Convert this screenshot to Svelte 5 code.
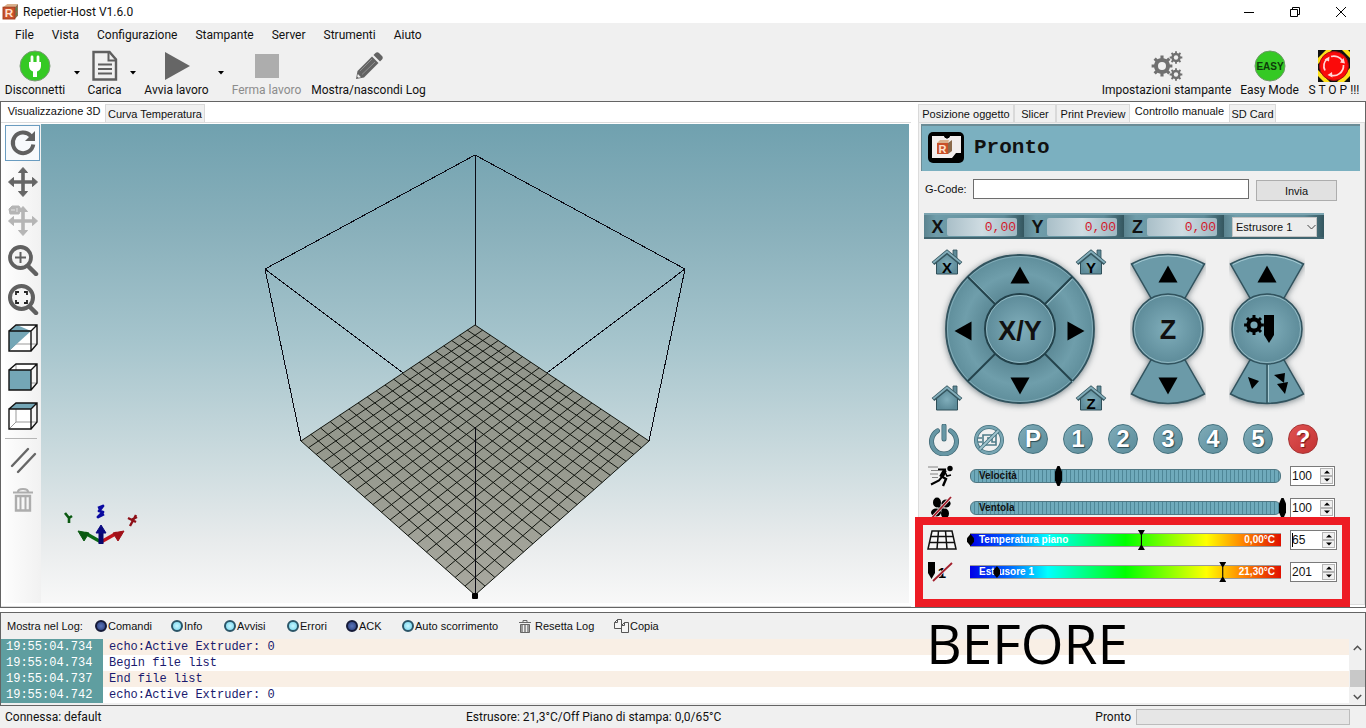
<script>
  const menu = ['File', 'Vista', 'Configurazione', 'Stampante', 'Server', 'Strumenti', 'Aiuto'];

  const mainTools = [
    { id: 'plug', label: 'Disconnetti', width: 60, split: true },
    { id: 'doc', label: 'Carica', width: 33, split: true },
    { id: 'play', label: 'Avvia lavoro', width: 65, split: true },
    { id: 'stop', label: 'Ferma lavoro', width: 69, disabled: true },
    { id: 'pencil', label: 'Mostra/nascondi Log', width: 113 }
  ];
  const sideTools = [
    { id: 'gears', label: 'Impostazioni stampante', width: 127 },
    { id: 'easy', label: 'Easy Mode', width: 57 },
    { id: 'emergency', label: 'S T O P !!!', width: 50 }
  ];

  const viewTools = [
    { id: 'rotate', label: 'Ruota', active: true },
    { id: 'move', label: 'Muovi' },
    { id: 'moveObject', label: 'Muovi oggetto', disabled: true },
    { id: 'zoom', label: 'Zoom' },
    { id: 'fit', label: 'Adatta' },
    { id: 'iso', label: 'Vista isometrica' },
    { id: 'front', label: 'Vista frontale' },
    { id: 'top', label: 'Vista dall’alto' }
  ];

  const rightTabs = [
    { label: 'Posizione oggetto', width: 96 },
    { label: 'Slicer', width: 42 },
    { label: 'Print Preview', width: 74 },
    { label: 'Controllo manuale', width: 99 },
    { label: 'SD Card', width: 47 }
  ];
  let activeTab = $state('Controllo manuale');

  const axes = ['X', 'Y', 'Z'];

  let sliders = $state([
    { id: 'speed', label: 'Velocità', min: 25, max: 300, value: 100 },
    { id: 'fan', label: 'Ventola', min: 0, max: 100, value: 100 },
    { id: 'bed', label: 'Temperatura piano', min: 0, max: 120, value: 65, heat: true, now: 0, read: '0,00°C' },
    { id: 'nozzle', label: 'Estrusore 1', min: 0, max: 250, value: 201, heat: true, now: 8.5, read: '21,30°C' }
  ]);

  function step(s, d) {
    s.value = Math.min(s.max, Math.max(s.min, Number(s.value) + d));
  }

  const filters = [
    { label: 'Comandi', on: true, width: 76 },
    { label: 'Info', on: false, width: 53 },
    { label: 'Avvisi', on: false, width: 63 },
    { label: 'Errori', on: false, width: 59 },
    { label: 'ACK', on: true, width: 56 },
    { label: 'Auto scorrimento', on: false, width: 117 }
  ];

  const log = [
    ['19:55:04.734', 'echo:Active Extruder: 0'],
    ['19:55:04.734', 'Begin file list'],
    ['19:55:04.737', 'End file list'],
    ['19:55:04.742', 'echo:Active Extruder: 0']
  ];

  // Perspective mapping of the unit square onto the print bed.
  const g = 38 / 232;
  function project(u, v) {
    const w = g * (u + v) + 1;
    const a = 260 * (1 + g) - 434;
    const b = 608 * (1 + g) - 434;
    const d = 317 * (1 + g) - 471;
    return `${((a * u + b * v + 434) / w).toFixed(1)} ${((d * (u + v) + 471) / w).toFixed(1)}`;
  }
  let gridPath = '';
  for (let i = 0; i <= 20; i++) {
    const t = i / 20;
    gridPath += `M${project(t, 0)}L${project(t, 1)}M${project(0, t)}L${project(1, t)}`;
  }

  function gear(cx, cy, r, ri, n) {
    let d = '';
    for (let i = 0; i < n; i++) {
      const c = (i / n) * Math.PI * 2;
      const h = Math.PI / n;
      [[-0.95, ri], [-0.5, ri], [-0.38, r], [0.38, r], [0.5, ri]].forEach(([k, rad]) => {
        d += `${d ? 'L' : 'M'}${(cx + Math.sin(c + k * h) * rad).toFixed(2)} ${(cy - Math.cos(c + k * h) * rad).toFixed(2)}`;
      });
    }
    return d + 'Z';
  }
</script>

{#snippet cubeLogo(size)}
  <svg width={size} height={size} viewBox="0 0 16 16" aria-hidden="true">
    <path d="M1 4 5 1l10 0-3 3z" fill="#d9b08c" />
    <path d="M12 4l3-3v11l-3 3z" fill="#8c6a4c" />
    <path d="M13 5l1-1v3l-1 1zM13 10l1-1v2l-1 1z" fill="#4d8a4c" />
    <rect x="1" y="4" width="11" height="11" fill="#c9502a" stroke="#a83c1c" />
    <text x="6.5" y="13.5" text-anchor="middle" font-family="Liberation Sans, sans-serif" font-weight="700" font-size="11" fill="#ffe2cf">R</text>
  </svg>
{/snippet}

{#snippet toolIcon(id)}
  <svg width="32" height="32" viewBox="0 0 32 32" aria-hidden="true">
    {#if id === 'plug'}
      <circle cx="16" cy="16" r="15" fill="#35c924" stroke="#7a9a76" stroke-width="1" />
      <path d="M13 7v6M19 7v6" stroke="#fff" stroke-width="2.800" stroke-linecap="round" />
      <path d="M10 12h12v4c0 3-2 5-4 5.500V27h-4v-5.500C12 21 10 19 10 16z" fill="#fff" />
    {:else if id === 'doc'}
      <path d="M4.500 2h16l6.500 7.500v20H4.500z" fill="none" stroke="#5f5f5f" stroke-width="2.400" />
      <path d="M19.500 2v8.500h7" fill="none" stroke="#5f5f5f" stroke-width="2" />
      <path d="M9 14.500h14M9 19h14M9 23.500h14" stroke="#5f5f5f" stroke-width="2.200" />
    {:else if id === 'play'}
      <path d="M4 2l25 14L4 30z" fill="#666" />
    {:else if id === 'stop'}
      <rect x="4" y="4" width="24" height="24" fill="#adadad" />
    {:else if id === 'pencil'}
      <path d="M3 29l1.500-8L19 6.500l6.500 6.500L11 27.500z" fill="#636363" />
      <path d="M20.500 5l2-2c1-1 2.500-1 3.500 0l3 3c1 1 1 2.500 0 3.500l-2 2z" fill="#636363" />
      <path d="M7 21l12-12M9 24.500L22 12" stroke="#999" stroke-width=".8" />
      <path d="M4.800 24l3.200 3.200-2.500.6-1.300-1.300z" fill="#f0f0f0" />
    {:else if id === 'gears'}
      <path d={gear(11, 16, 10.5, 8, 8)} fill="#707070" />
      <circle cx="11" cy="16" r="4" fill="#f0f0f0" />
      <path d={gear(25, 7.500, 6.4, 4.7, 8)} fill="#707070" />
      <circle cx="25" cy="7.500" r="2.200" fill="#f0f0f0" />
      <path d={gear(25, 24.500, 6.4, 4.7, 8)} fill="#707070" />
      <circle cx="25" cy="24.500" r="2.200" fill="#f0f0f0" />
    {:else if id === 'easy'}
      <circle cx="16" cy="16" r="15" fill="#35c924" stroke="#6b9a66" stroke-width="1" />
      <text x="16" y="19.500" text-anchor="middle" font-family="Liberation Sans, sans-serif" font-weight="700" font-size="10" fill="#0d3b0a">EASY</text>
    {:else if id === 'emergency'}
      <rect width="32" height="32" fill="#111" />
      <path d="M0 8L8 0h6L0 14zM32 2v6L24 0h6zM0 20v6l6 6h6zM32 18v8l-6 6h-7z" fill="#ffe11a" />
      <circle cx="16" cy="16" r="14.500" fill="#fb0a0a" stroke="#a01010" stroke-width="1" />
      <g fill="none" stroke="#ffd6d6" stroke-width="1.700">
        <path d="M7 20.500A10 10 0 0 1 9 9" />
        <path d="M13 6.500A10 10 0 0 1 24.500 11" />
        <path d="M25.500 15A10 10 0 0 1 12 25" />
      </g>
      <path d="M6.500 9.500l5-3-.5 5zM22 12.500l5 1-1.500-5.500zM14 22l-4.500 3 5 2.500z" fill="#ffd6d6" />
    {/if}
  </svg>
{/snippet}

{#snippet viewIcon(id)}
  <svg width="32" height="32" viewBox="0 0 32 32" aria-hidden="true">
    {#if id === 'rotate'}
      <path d="M23.800 9A10.300 10.300 0 1 0 26.300 17.500" fill="none" stroke="#606060" stroke-width="4" />
      <path d="M28 4v10H18z" fill="#606060" />
    {:else if id === 'move' || id === 'moveObject'}
      <g fill={id === 'move' ? '#666' : '#b5b5b5'} stroke={id === 'move' ? '#666' : '#b5b5b5'}>
        <path d="M16 5v22M5 16h22" stroke-width="3.600" />
        <path d="M16 1.500l4.500 5h-9zM16 30.500l4.500-5h-9zM1.500 16l5-4.500v9zM30.500 16l-5-4.500v9z" stroke-width="1" stroke-linejoin="round" />
        {#if id === 'moveObject'}
          <path d="M2 4l3-3h7l2 3-2 5H3z" stroke-width="1" />
          <path d="M4 5h4M10 3v4" stroke="#e4e4e4" />
        {/if}
      </g>
    {:else if id === 'zoom'}
      <path d="M22 23l7 7" stroke="#606060" stroke-width="4.500" stroke-linecap="round" />
      <circle cx="13.500" cy="13.500" r="10.500" fill="#f4f4f4" stroke="#606060" stroke-width="3.800" />
      <path d="M13.500 8v11M8 13.500h11" stroke="#606060" stroke-width="2" />
    {:else if id === 'fit'}
      <path d="M23 24l6 6" stroke="#606060" stroke-width="4.500" stroke-linecap="round" />
      <circle cx="14.500" cy="14.500" r="11.500" fill="#f4f4f4" stroke="#606060" stroke-width="4" />
      <path d="M9 12V9h3M17 9h3v3M20 17v3h-3M12 20H9v-3" fill="none" stroke="#222" stroke-width="1.800" />
    {:else}
      <path d="M2 9L9 3h21l-6 6v20H2z" fill="#fff" />
      <path d="M24 9l6-6v19l-6 7z" fill="#f5f5f5" />
      <path d="M9 3v19h21M9 22l-7 7" fill="none" stroke="#999" />
      {#if id === 'iso'}<path d="M2 9L10 3l14 6L2 29z" fill="#74a6b6" />{/if}
      {#if id === 'front'}<path d="M2 9h22v20H2z" fill="#74a6b6" />{/if}
      {#if id === 'top'}<path d="M2 9l7-6h21l-6 6z" fill="#74a6b6" />{/if}
      <path d="M2 9h22v20H2zL9 3h21v19l-6 7M24 9l6-6" fill="none" stroke="#111" stroke-width="1.400" />
    {/if}
  </svg>
{/snippet}

{#snippet arrow(dir)}
  <svg class="arrow" width="20" height="20" viewBox="0 0 20 20" aria-hidden="true">
    {#if dir === 'up'}<path d="M10 1.500l9.500 17H.5z" />{/if}
    {#if dir === 'down'}<path d="M10 18.500l9.500-17H.5z" />{/if}
    {#if dir === 'left'}<path d="M1.500 10l17-9.500v19z" />{/if}
    {#if dir === 'right'}<path d="M18.500 10l-17-9.500v19z" />{/if}
  </svg>
{/snippet}

{#snippet house(letter)}
  <button class="house" aria-label={'Home ' + letter}>
    <svg width="32" height="28" viewBox="0 0 32 28" aria-hidden="true">
      <path d="M22 2h4v9h-4z" fill="#5f8b98" stroke="#2f4f59" stroke-width=".8" />
      <path d="M5.500 14L16 5l10.500 9v12h-21z" fill="url(#steel)" stroke="#2f4f59" stroke-width="1" />
      <path d="M2 15.500L16 4l14 11.500" fill="none" stroke="#35565f" stroke-width="4.200" />
      <path d="M2.300 14.700L16 3.500l13.700 11.200" fill="none" stroke="#84aebb" stroke-width="1.800" />
      {#if letter}
        <text x="16" y="24.500" text-anchor="middle" font-family="Liberation Sans, sans-serif" font-weight="700" font-size="15">{letter}</text>
      {/if}
    </svg>
  </button>
{/snippet}

{#snippet sliderIcon(id)}
  <svg width="30" height="26" viewBox="0 0 30 26" aria-hidden="true">
    {#if id === 'speed'}
      <circle cx="23" cy="5.500" r="2.700" />
      <path d="M11 6.500h7l-1 5-5 6-8 4" fill="none" stroke="#000" stroke-width="2" />
      <path d="M18 7l-4 7" stroke="#000" stroke-width="4" />
      <path d="M14 13l5 3-3 7" fill="none" stroke="#000" stroke-width="2.400" />
      <path d="M18 9l2 4 4-1" fill="none" stroke="#000" stroke-width="1.600" />
      <path d="M1 4h10M4 7.500h8M3 11h8M5 14.500h6" stroke="#777" stroke-width=".9" />
    {:else if id === 'fan'}
      <g transform="translate(14 13)">
        <ellipse cx="-4" cy="-5.500" rx="4" ry="5" />
        <ellipse cx="5" cy="-4.500" rx="4.600" ry="4" />
        <ellipse cx="4" cy="5.500" rx="4" ry="5" />
        <ellipse cx="-5" cy="4.500" rx="5" ry="4" />
        <path d="M-3-3L3 3M3-3L-3 3" stroke="#000" stroke-width="3" />
      </g>
      <path d="M4 24L24 2" stroke="#f0f0f0" stroke-width="3" />
      <path d="M4 24L24 2" stroke="#a31f2c" stroke-width="1.800" />
    {:else if id === 'bed'}
      <path d="M5 4h20l4 18H1zM3.800 9.500h22.400M2.500 15.500h25M11.500 4l-1.500 18M18.500 4l1.500 18" fill="#f7f7f7" stroke="#111" stroke-width="1.500" />
    {:else}
      <path d="M1 3h7v11l-3.500 6L1 14z" />
      <text x="15" y="19" text-anchor="middle" font-family="Liberation Sans, sans-serif" font-weight="700" font-size="15">1</text>
      <path d="M6 22L25 4" stroke="#f0f0f0" stroke-width="3" />
      <path d="M6 22L25 4" stroke="#a31f2c" stroke-width="1.800" />
    {/if}
  </svg>
{/snippet}

<div class="window">
  <header class="title">
    {@render cubeLogo(17)}
    <span>Repetier-Host V1.6.0</span>
    <div class="caption">
      <button aria-label="Riduci a icona"><svg width="12" height="12" viewBox="0 0 12 12"><path d="M1 6.500h10" stroke="#000" /></svg></button>
      <button aria-label="Ripristina"><svg width="12" height="12" viewBox="0 0 12 12"><path d="M1.500 3.500h7v7h-7zM3.500 3V1.500h7v7H9" fill="none" stroke="#000" /></svg></button>
      <button aria-label="Chiudi"><svg width="12" height="12" viewBox="0 0 12 12"><path d="M1 1l10 10M11 1L1 11" stroke="#000" /></svg></button>
    </div>
  </header>

  <nav class="menu">
    {#each menu as item}<button>{item}</button>{/each}
  </nav>

  <div class="toolbar">
    {#each mainTools as t}
      <button class="tool" disabled={t.disabled} style="width:{t.width}px">
        {@render toolIcon(t.id)}<span>{t.label}</span>
      </button>
      {#if t.split}
        <button class="more" aria-label={t.label + ': altre opzioni'}><svg width="6" height="4" viewBox="0 0 6 4"><path d="M0 0h6L3 3.500z" /></svg></button>
      {:else}
        <i class="gap"></i>
      {/if}
    {/each}
    <div class="side">
      {#each sideTools as t}
        <button class="tool" style="width:{t.width}px">{@render toolIcon(t.id)}<span>{t.label}</span></button>
      {/each}
    </div>
  </div>

  <main>
    <section class="left">
      <div class="tabs" role="tablist">
        <button role="tab" class="tab active" aria-selected="true" style="width:102px">Visualizzazione 3D</button>
        <button role="tab" class="tab" aria-selected="false" style="width:100px">Curva Temperatura</button>
      </div>
      <div class="work">
        <div class="viewtools">
          {#each viewTools as t}
            <button class:active={t.active} disabled={t.disabled} aria-label={t.label}>{@render viewIcon(t.id)}</button>
          {/each}
          <hr />
          <button aria-label="Proiezione parallela">
            <svg width="32" height="32" viewBox="0 0 32 32"><path d="M5 21L21 4M11 27L28 9" stroke="#666" stroke-width="2.400" stroke-linecap="round" /></svg>
          </button>
          <button disabled aria-label="Elimina">
            <svg width="32" height="32" viewBox="0 0 32 32" fill="none" stroke="#adadad">
              <path d="M6 8.500h20M11 8c0-4 10-4 10 0" stroke-width="2.200" />
              <path d="M9 12h14v14.500H9z" stroke-width="2.400" /><path d="M13.500 13v13M18.500 13v13" stroke-width="2" />
            </svg>
          </button>
        </div>
        <div class="scene">
          <svg viewBox="0 0 868 479" role="img" aria-label="Area di stampa">
            <path d="M434 31L224 145L434 303L644 145zM434 31V201M224 145L260 317M644 145L608 317" class="wire" />
            <path d="M434 201L608 317L434 471L260 317z" fill="url(#bed)" />
            <path d={gridPath} class="mesh" />
            <path d="M434 303V471" class="wire" />
            <rect x="431" y="469" width="6" height="6" rx="1" />
            <g stroke-linejoin="round">
              <path d="M60 418L44 409" stroke="#0b6a14" stroke-width="3.500" />
              <path d="M37 407l11 2-5 8z" fill="#0b5a12" stroke="#0b5a12" />
              <path d="M60 418L76 409" stroke="#c0141c" stroke-width="3.500" />
              <path d="M83 407l-11 2 5 8z" fill="#a01018" stroke="#a01018" />
              <path d="M60 420V408" stroke="#08086e" stroke-width="5" />
              <path d="M60 401l5 8H55z" fill="#0a0a80" stroke="#0a0a80" />
              <path d="M24 389l4 5 3-2M28 394l0 5" fill="none" stroke="#0b5a12" stroke-width="2.600" />
              <path d="M57 384l5-2-4 5 4 1-5 5 6-3" fill="none" stroke="#0a0aa0" stroke-width="2.800" />
              <path d="M95 391L89 402M87 394l8 4M90 396l6-3" fill="none" stroke="#8e1018" stroke-width="2.400" />
            </g>
            <defs>
              <linearGradient id="bed" x1="0" y1="0" x2="0" y2="1">
                <stop offset="0" stop-color="#90948b" /><stop offset=".5" stop-color="#96998e" /><stop offset="1" stop-color="#a8a89f" />
              </linearGradient>
            </defs>
          </svg>
        </div>
      </div>
    </section>

    <aside>
      <div class="tabs" role="tablist">
        {#each rightTabs as t}
          <button role="tab" class="tab" class:active={t.label === activeTab} aria-selected={t.label === activeTab} style="width:{t.width}px" onclick={() => (activeTab = t.label)}>{t.label}</button>
        {/each}
      </div>
      <div class="panel">
        <div class="status">
          <svg width="36" height="31" viewBox="0 0 36 31" aria-hidden="true">
            <rect width="36" height="31" rx="5" />
            <path d="M4 4h12l3 3 3-3h11v17h-5l-4 5H4z" fill="#f3eeee" />
            <path d="M15 2h8l-2 4h-4z" />
            <path d="M9 11l3-3h9l-1 3z" fill="#d9b08c" /><path d="M20 11l4-3v11l-4 3z" fill="#8c6a4c" />
            <rect x="9" y="11" width="11" height="11" fill="#c9502a" />
            <text x="14.500" y="20.500" text-anchor="middle" font-family="Liberation Sans, sans-serif" font-weight="700" font-size="11" fill="#ffe2cf">R</text>
          </svg>
          <strong>Pronto</strong>
        </div>

        <div class="gcode">
          <label for="gcode">G-Code:</label>
          <input id="gcode" type="text" />
          <button>Invia</button>
        </div>

        <div class="coords">
          {#each axes as a}
            <div class="coord"><b>{a}</b><output>0,00</output></div>
          {/each}
          <div class="coord">
            <select aria-label="Estrusore attivo"><option>Estrusore 1</option></select>
            <svg class="chev" width="9" height="6" viewBox="0 0 9 6" aria-hidden="true"><path d="M.5 1l4 4 4-4" fill="none" stroke="#444" /></svg>
          </div>
        </div>

        <div class="pads">
          <div class="pad xy">
            <svg class="art" width="176" height="164" viewBox="0 0 176 164" aria-hidden="true">
              <defs>
                <radialGradient id="steel"><stop offset="0" stop-color="#80aebb" /><stop offset="1" stop-color="#5d8b99" /></radialGradient>
                <radialGradient id="ring"><stop offset=".45" stop-color="#5a8794" /><stop offset=".75" stop-color="#6f9eab" /><stop offset="1" stop-color="#5f8e9b" /></radialGradient>
              </defs>
              <circle cx="89" cy="81" r="74" fill="url(#ring)" stroke="#31535e" stroke-width="1.800" class="shadow" />
              <circle cx="89" cy="81" r="72.500" fill="none" stroke="#9ec3cd" stroke-opacity=".55" />
              <path d="M38 29L66 57M114 106L142 134" stroke="#9cc2cc" stroke-width="1.500" />
              <path d="M141 31L115 57M37 133L64 106" stroke="#9cc2cc" stroke-width="1.500" />
              <path d="M36.700 28.700L65 57M141.300 28.700L113 57M36.700 133.300L65 105M141.300 133.300L113 105" stroke="#23424b" stroke-width="2" />
              <circle cx="89" cy="81" r="35" fill="url(#steel)" stroke="#23424b" stroke-width="2" />
              <circle cx="89" cy="81" r="33.500" fill="none" stroke="#a6cad3" stroke-opacity=".7" />
            </svg>
            <span class="corner">{@render house('X')}</span>
            <button class="jog" aria-label="Y +">{@render arrow('up')}</button>
            <span class="corner right">{@render house('Y')}</span>
            <button class="jog" aria-label="X -">{@render arrow('left')}</button>
            <b class="name">X/Y</b>
            <button class="jog" aria-label="X +">{@render arrow('right')}</button>
            <span class="corner bottom">{@render house('')}</span>
            <button class="jog" aria-label="Y -">{@render arrow('down')}</button>
            <span class="corner right bottom">{@render house('Z')}</span>
          </div>

          <div class="pad tower">
            <svg class="art" width="76" height="164" viewBox="0 0 76 164" aria-hidden="true">
              <g stroke="#31535e" stroke-width="1.500" class="shadow">
                <path d="M1.500 16A74.500 74.500 0 0 1 74.500 16L55 50H21z" fill="#6b9aa8" />
                <path d="M1.500 146A74.500 74.500 0 0 0 74.500 146L55 112H21z" fill="#6b9aa8" />
                <circle cx="38" cy="81" r="35" fill="url(#steel)" />
              </g>
              <path d="M4 16.500A72 72 0 0 1 72 16.500" fill="none" stroke="#a6cad3" />
              <circle cx="38" cy="81" r="33.500" fill="none" stroke="#a6cad3" stroke-opacity=".7" />
            </svg>
            <button class="jog" aria-label="Z +">{@render arrow('up')}</button>
            <b class="name">Z</b>
            <button class="jog" aria-label="Z -">{@render arrow('down')}</button>
          </div>

          <div class="pad tower">
            <svg class="art" width="76" height="164" viewBox="0 0 76 164" aria-hidden="true">
              <g stroke="#31535e" stroke-width="1.500" class="shadow">
                <path d="M1.500 16A74.500 74.500 0 0 1 74.500 16L55 50H21z" fill="#6b9aa8" />
                <path d="M1.500 146A74.500 74.500 0 0 0 74.500 146L55 112H21z" fill="#6b9aa8" />
                <path d="M38 112V155" />
                <circle cx="38" cy="81" r="35" fill="url(#steel)" />
              </g>
              <path d="M4 16.500A72 72 0 0 1 72 16.500M39.500 117V154" fill="none" stroke="#a6cad3" />
              <circle cx="38" cy="81" r="33.500" fill="none" stroke="#a6cad3" stroke-opacity=".7" />
              <path d="M35 67h10v20l-5 8-5-8z" />
              <path d={gear(25, 77, 10, 7.600, 8)} />
              <circle cx="25" cy="77" r="3.600" fill="#78a7b4" />
              <path d="M19 129l11 4-7 8zM45 127l11-2-1 10zM48 136l11-2-3 12z" />
            </svg>
            <button class="jog" aria-label="Ritira filamento">{@render arrow('up')}</button>
            <span class="name"></span>
            <div class="half"><button class="jog" aria-label="Estrudi"></button><button class="jog" aria-label="Estrudi veloce"></button></div>
          </div>
        </div>

        <div class="rounds">
          <button aria-label="Alimentazione">
            <svg width="32" height="32" viewBox="0 0 32 32" fill="none" stroke-linecap="round">
              <path d="M9.500 6.800a12.500 12.500 0 1 0 13 0" stroke="#3f6672" stroke-width="5" />
              <path d="M9.500 6.800a12.500 12.500 0 1 0 13 0" stroke="#6797a5" stroke-width="3.600" />
              <path d="M16 2v13" stroke="#3f6672" stroke-width="5" /><path d="M16 2v13" stroke="#6797a5" stroke-width="3.600" />
            </svg>
          </button>
          <button aria-label="Ferma motori">
            <svg width="32" height="32" viewBox="0 0 32 32" fill="none">
              <circle cx="16" cy="16" r="13" stroke="#43707d" stroke-width="4" /><circle cx="16" cy="16" r="13" stroke="#7aa7b4" stroke-width="2.400" />
              <path d="M5 14h4M5 18h4M10 11h13v10H10zM14 14h5v4h4" stroke="#4d7b88" stroke-width="1.600" />
              <path d="M6.500 25.500l19-19" stroke="#43707d" stroke-width="3.600" /><path d="M6.500 25.500l19-19" stroke="#a0c4ce" stroke-width="1.800" />
            </svg>
          </button>
          {#each ['P', '1', '2', '3', '4', '5', '?'] as c}
            <button class="disc" class:red={c === '?'}>{c}</button>
          {/each}
        </div>

        <div class="sliders">
          {#each sliders as s}
            <div class="row">
              {@render sliderIcon(s.id)}
              <div class="rail" class:heat={s.heat}>
                <label for={s.id}>{s.label}</label>
                {#if s.heat}
                  <output>{s.read}</output>
                  <i class="now" style="left:{s.now}%"></i>
                {/if}
                <input id={s.id} type="range" min={s.min} max={s.max} bind:value={s.value} />
              </div>
              <div class="spin" class:wide={s.heat}>
                <input type="text" aria-label={s.label + ' valore'} bind:value={s.value} />
                {#if s.id === 'bed'}<i class="caret"></i>{/if}
                <div class="arrows">
                  <button aria-label="Aumenta" onclick={() => step(s, 1)}><svg width="6" height="4" viewBox="0 0 6 4"><path d="M0 3.500h6L3 .5z" /></svg></button>
                  <button aria-label="Diminuisci" onclick={() => step(s, -1)}><svg width="6" height="4" viewBox="0 0 6 4"><path d="M0 .5h6L3 3.500z" /></svg></button>
                </div>
              </div>
            </div>
          {/each}
        </div>
      </div>
      <div class="highlight"></div>
    </aside>
  </main>

  <section class="log">
    <div class="filters">
      <span class="lead">Mostra nel Log:</span>
      {#each filters as f}
        <label style="width:{f.width}px"><input type="checkbox" checked={f.on} />{f.label}</label>
      {/each}
      <button class="reset">
        <svg width="12" height="13" viewBox="0 0 12 13" fill="none" stroke="#666"><path d="M0 2.500h12M4 2V.5h4V2" /><path d="M1.500 4.500h9v8h-9z" fill="#999" /><path d="M4.500 5v7M7.500 5v7" stroke="#eee" /></svg>
        Resetta Log
      </button>
      <button>
        <svg width="15" height="14" viewBox="0 0 15 14" fill="#f4f4f4" stroke="#555"><path d="M3.500.5h4v9h-7v-6zM3.500.500v3h-3" /><path d="M10.500 3.500h4v10h-7v-7zM10.500 3.500v3h-3" /></svg>
        Copia
      </button>
    </div>
    <div class="lines">
      <ol>
        {#each log as [time, text]}<li><time>{time}</time><span>{text}</span></li>{/each}
      </ol>
      <div class="scroll" aria-hidden="true">
        <svg width="9" height="6" viewBox="0 0 9 6"><path d="M.8 5l3.700-3.700L8.200 5" /></svg>
        <i></i>
        <svg width="9" height="6" viewBox="0 0 9 6"><path d="M.8 1l3.700 3.700L8.200 1" /></svg>
      </div>
    </div>
    <strong class="stamp">BEFORE</strong>
  </section>

  <footer>
    <span class="conn">Connessa: default</span>
    <span class="temps">Estrusore: 21,3°C/Off Piano di stampa: 0,0/65°C</span>
    <label for="job">Pronto</label>
    <div id="job" class="bar" role="progressbar" aria-label="Avanzamento"></div>
  </footer>
</div>

<style>
  :global(body) { background: #f0f0f0; }
  .window {
    min-height: 100vh;
    display: flex;
    flex-direction: column;
    background: #f0f0f0;
    color: #111;
    font: 12px/16px Roboto, "Noto Sans", sans-serif;
  }
  .window :global(*) { box-sizing: border-box; }
  button { border: 0; padding: 0; margin: 0; background: none; color: inherit; font: inherit; }
  svg { display: block; flex: none; }

  .title { display: flex; align-items: center; height: 23px; padding: 0 2px; gap: 4px; background: #fff; }
  .caption { margin-left: auto; display: flex; }
  .caption button { width: 46px; height: 23px; display: grid; place-items: center; }

  .menu { display: flex; height: 24px; padding: 0 15px; gap: 18px; align-items: center; }

  .toolbar { display: flex; height: 54px; padding: 3px 7px 0 5px; }
  .tool { display: flex; flex-direction: column; align-items: center; white-space: nowrap; }
  .tool:disabled { color: #8c8c8c; }
  .more { width: 23px; height: 45px; display: grid; place-items: center; }
  .gap { width: 11px; }
  .side { margin-left: auto; display: flex; gap: 11px; }

  main {
    flex: 1;
    display: flex;
    gap: 7px;
    border: 1px solid #646464;
    background: #fff;
    font: 11px/14px "Liberation Sans", Arial, sans-serif;
  }
  .tabs { display: flex; align-items: flex-end; height: 21px; border-bottom: 1px solid #dcdcdc; }
  .tab { height: 18px; border: 1px solid #d9d9d9; border-bottom: 0; background: #f0f0f0; white-space: nowrap; }
  .tab.active { height: 20px; padding-bottom: 3px; background: #fff; border-color: #fff; }

  .left { flex: 1; display: flex; flex-direction: column; }
  .left .tabs { padding-left: 2px; }
  .work { flex: 1; display: flex; padding: 1px 2px 3px 4px; border-bottom: 1px solid #dcdcdc; }
  .viewtools { width: 36px; display: flex; flex-direction: column; gap: 3px; padding-top: 1px; background: linear-gradient(90deg, #fdfdfd, #f1f1f1); }
  .viewtools button { width: 35px; height: 36px; display: grid; place-items: center; border: 1px solid transparent; }
  .viewtools .active { border-color: #6a9cc0; background: #f8fafc; }
  .viewtools hr { width: 32px; margin: 1px 0; border: 0; border-top: 1px solid #b5b5b5; }
  .scene { flex: 1; contain: size; background: linear-gradient(#70a1af, #89b0bb 22%, #a5c4cc 45%, #cfdde0 72%, #e8ebec 87%, #f8f8f8); }
  .scene svg { width: 100%; height: 100%; }
  .wire { fill: none; stroke: #0a0a14; stroke-width: 1; shape-rendering: crispEdges; }
  .mesh { fill: none; stroke: #10140e; stroke-width: 1; }

  aside { position: relative; width: 447px; display: flex; flex-direction: column; }
  .panel { flex: 1; margin-bottom: 2px; padding: 1px 4px 0 2px; border: 1px solid #dcdcdc; border-top: 0; background: #f0f0f0; }
  .status { display: flex; align-items: center; gap: 10px; height: 47px; padding: 0 0 2px 6px; background: #7bb0c0; border-top: 2px solid #6b8c96; border-left: 1px solid #6b8c96; }
  .status strong { font: 700 21px/24px "Liberation Mono", "Courier New", monospace; }

  .gcode { display: flex; height: 22px; margin: 8px 23px 0 4px; }
  .gcode label { width: 48px; line-height: 20px; white-space: nowrap; }
  .gcode input { flex: 1; height: 20px; min-width: 0; border: 1px solid #6d6d6d; background: #fff; }
  .gcode button { width: 81px; height: 21px; margin: 1px 0 0 7px; border: 1px solid #adadad; background: #e1e1e1; }

  .coords { display: flex; margin: 12px 0 0 3px; }
  .coord {
    position: relative;
    width: 100px; height: 26px; padding: 3px 7px 2px 5px;
    display: flex; align-items: center; justify-content: space-between;
    background: linear-gradient(90deg, #5b838f, #6f9daa 12%, #5e8b98 80%, #34565f);
    border-top: 2px solid #7ba4b0; border-bottom: 2px solid #416570;
  }
  .coord b { width: 17px; font-size: 18px; text-align: center; }
  .coord output {
    width: 70px; height: 18px; padding: 2px 1px 0 0; text-align: right; color: #d2182b; border-radius: 2px;
    font: 400 13px/16px "Liberation Mono", "Courier New", monospace;
    background: linear-gradient(90deg, #a9bfc8, #cfdce2 50%, #9fb8c2);
  }
  .coord select {
    width: 89px; height: 20px; margin-left: 3px; padding: 0 3px; appearance: none; border: 1px solid #c5c5c5; border-radius: 0;
    background: #ececec; color: #111; font: 11px/16px "Liberation Sans", Arial, sans-serif;
  }
  .chev { position: absolute; right: 8px; top: 9px; pointer-events: none; }

  .pads { display: flex; margin: 9px 0 0 10px; gap: 23px; }
  .pad { position: relative; display: grid; height: 164px; }
  .pad > :global(*) { position: relative; }
  .pad .art { position: absolute; left: 0; top: 0; }
  .xy { width: 176px; grid-template: 54px 1fr 52px / 64px 1fr 62px; }
  .tower { width: 76px; grid-template: 52px 1fr 53px / 1fr; }
  .shadow { filter: drop-shadow(0 1px 3px rgba(20, 40, 50, .55)); }
  .jog { display: grid; place-items: center; }
  .half { display: flex; }
  .half .jog { flex: 1; }
  .house { display: block; width: 32px; height: 28px; }
  .corner { place-self: start; }
  .corner.right { justify-self: end; }
  .corner.bottom { align-self: end; }
  .name { place-self: center; font-size: 27px; line-height: 30px; font-weight: 700; }

  .rounds { display: flex; gap: 15px; margin: 12px 0 0 7px; height: 30px; }
  .rounds button { width: 30px; height: 30px; display: grid; place-items: center; }
  .rounds .disc {
    border: 1px solid #43707d; border-radius: 50%;
    background: linear-gradient(135deg, #7eabb8, #5c8c9a);
    color: #fff; font: 700 24px/28px "Liberation Sans", Arial, sans-serif;
    text-shadow: 0 0 1px #2b4b55, 1px 1px 1px #2b4b55;
  }
  .rounds .red { border-color: #a53434; background: linear-gradient(135deg, #e05252, #c23232); text-shadow: 1px 1px 1px #701818; }

  .sliders { margin: 6px 23px 0 6px; }
  .row { display: flex; align-items: center; height: 32px; }
  .rail {
    position: relative; flex: 1; height: 14px; margin: 0 9px 0 13px; padding: 0 5px 0 8px;
    display: flex; align-items: center; justify-content: space-between;
    border: 1px solid #4f7783; border-radius: 6px;
    background: repeating-linear-gradient(90deg, #6faabb 0 3px, #4f8797 3px 4px);
    font-size: 10px; font-weight: 700;
  }
  .rail.heat {
    border-color: #9a9a9a; border-radius: 0; border-width: 1px 0; padding: 0 6px 0 9px; color: #fff;
    background: linear-gradient(90deg, #0000e6, #0060ff 12%, #00ffff 25%, #00ff00 50%, #ffff00 76%, #ff8c00 87%, #e01000);
  }
  .rail input {
    position: absolute; left: 0; top: -4px; width: calc(100% + 6px); height: 20px; margin: 0;
    appearance: none; background: none;
  }
  .rail input::-webkit-slider-thumb {
    appearance: none; width: 7px; height: 20px; background: #000;
    clip-path: polygon(35% 0, 65% 0, 100% 28%, 100% 72%, 65% 100%, 35% 100%, 0 72%, 0 28%);
  }
  .rail.heat input::-webkit-slider-thumb {
    clip-path: polygon(0 0, 100% 0, 58% 25%, 58% 75%, 100% 100%, 0 100%, 42% 75%, 42% 25%);
  }
  .now { position: absolute; top: 0; width: 7px; height: 12px; margin-left: -3px; background: #000; clip-path: polygon(50% 0, 100% 35%, 100% 65%, 50% 100%, 0 65%, 0 35%); }

  .spin { position: relative; display: flex; width: 45px; height: 20px; margin-right: 2px; border: 1px solid #7a7a7a; background: #fff; }
  .spin.wide { width: 47px; margin-right: 0; }
  .spin input { flex: 1; min-width: 0; width: 0; padding: 0 0 0 1px; border: 0; background: none; color: #111; font: 12px/16px "Liberation Sans", Arial, sans-serif; }
  .caret { position: absolute; left: 1px; top: 2px; width: 1px; height: 14px; background: #000; }
  .arrows { width: 15px; display: flex; flex-direction: column; padding: 1px; }
  .arrows button { flex: 1; display: grid; place-items: center; border: 1px solid #b4b4b4; background: #f0f0f0; }

  .highlight { position: absolute; left: -3px; right: 15px; top: 415px; height: 90px; border: 8px solid #ed1c24; pointer-events: none; }

  .log { position: relative; margin-top: 4px; border: 1px solid #646464; box-shadow: 0 -4px #fff; font: 11px/14px "Liberation Sans", Arial, sans-serif; }
  .filters { display: flex; align-items: center; height: 26px; padding-left: 6px; }
  .lead { width: 88px; }
  .filters label { display: flex; align-items: center; gap: 1px; white-space: nowrap; }
  .filters input {
    appearance: none; flex: none; width: 12px; height: 12px; margin: 0; border: 2px solid #2b5568; border-radius: 50%;
    background: radial-gradient(#c9f6ff, #6fd4ee);
  }
  .filters input:checked { border-color: #151a38; background: radial-gradient(#5a74b8, #2b3d7a); }
  .filters button { display: flex; align-items: center; gap: 4px; }
  .filters .reset { width: 95px; }
  .filters button:last-child { gap: 1px; }
  .lines { display: flex; height: 66px; }
  ol { flex: 1; margin: 0; padding: 0; list-style: none; background: #fff; border-bottom: 2px solid #f0f0f0; font: 12px/16px "Liberation Mono", "Courier New", monospace; }
  li { display: flex; height: 16px; color: #1a1a6e; }
  li:nth-child(odd) { background: #f9efe5; }
  time { width: 102px; padding-left: 5px; background: #5f9ea0; color: #fff; }
  li span { padding-left: 6px; }
  .scroll { width: 16px; display: flex; flex-direction: column; align-items: center; padding: 6px 0 5px; }
  .scroll i { width: 15px; height: 17px; margin: auto 0 7px; background: #c8c8c8; }
  .scroll path { fill: none; stroke: #505050; stroke-width: 1.5; }
  .stamp { position: absolute; right: 237px; top: -2px; font: 400 55px/64px "Open Sans", "Noto Sans", sans-serif; color: #000; }

  footer { display: flex; align-items: center; height: 22px; padding: 0 16px 0 5px; }
  .conn { width: 461px; }
  .temps { flex: 1; }
  .bar { width: 214px; height: 16px; margin-left: 5px; border: 1px solid #bcbcbc; background: #e6e6e6; }
</style>
